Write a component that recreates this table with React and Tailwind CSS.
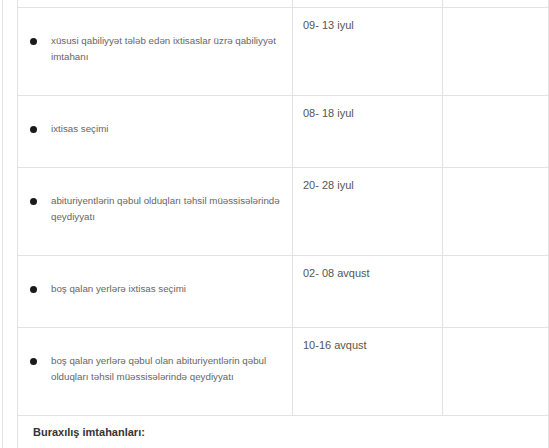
import React from "react";

const rows = [
  { text: ["xüsusi qabiliyyət tələb edən ixtisaslar üzrə qabiliyyət", "imtahanı"], date: "09- 13 iyul", h: "h-[88px]" },
  { text: ["ixtisas seçimi"], date: "08- 18 iyul", h: "h-[72px]" },
  { text: ["abituriyentlərin qəbul olduqları təhsil müəssisələrində", "qeydiyyatı"], date: "20- 28 iyul", h: "h-[88px]" },
  { text: ["boş qalan yerlərə ixtisas seçimi"], date: "02- 08 avqust", h: "h-[72px]" },
  { text: ["boş qalan yerlərə qəbul olan abituriyentlərin qəbul", "olduqları təhsil müəssisələrində qeydiyyatı"], date: "10-16 avqust", h: "h-[88px]" },
];

export default function App() {
  return (
    <div className="w-[549px] h-[448px] overflow-hidden bg-white" style={{ fontFamily: "'Liberation Sans', Arial, sans-serif" }}>
      <div className="ml-[2px] border-l border-[#e4e4e4] pl-[14px] -mt-[1px]">
        <table className="w-[531px] border-collapse table-fixed">
          <colgroup>
            <col className="w-[275px]" />
            <col className="w-[150px]" />
            <col className="w-[106px]" />
          </colgroup>
          <tbody>
            <tr className="h-[8px]">
              <td className="border border-[#e2e2e2]" />
              <td className="border border-[#e2e2e2]" />
              <td className="border border-[#e2e2e2]" />
            </tr>
            {rows.map((r, i) => (
              <tr key={i} className={r.h}>
                <td className="border border-[#e2e2e2] align-middle">
                  <div className="flex items-start pl-[12px] pb-[5px]">
                    <span className="w-[7px] h-[7px] rounded-full bg-[#1a1a1a] mt-[5px] shrink-0" />
                    <div className="ml-[14px] text-[9.75px] leading-[16px] text-[#666]">
                      {r.text.map((t, j) => (
                        <div key={j}>{t}</div>
                      ))}
                    </div>
                  </div>
                </td>
                <td className="border border-[#e2e2e2] align-top pt-[9px] pl-[10px] text-[11px] leading-[16px] text-[#555]">
                  {r.date}
                </td>
                <td className="border border-[#e2e2e2]" />
              </tr>
            ))}
            <tr className="h-[40px]">
              <td colSpan={3} className="border border-[#e2e2e2] align-top pt-[8px] pl-[15px] text-[11px] font-bold text-[#333]">
                Buraxılış imtahanları:
              </td>
            </tr>
          </tbody>
        </table>
      </div>
    </div>
  );
}
